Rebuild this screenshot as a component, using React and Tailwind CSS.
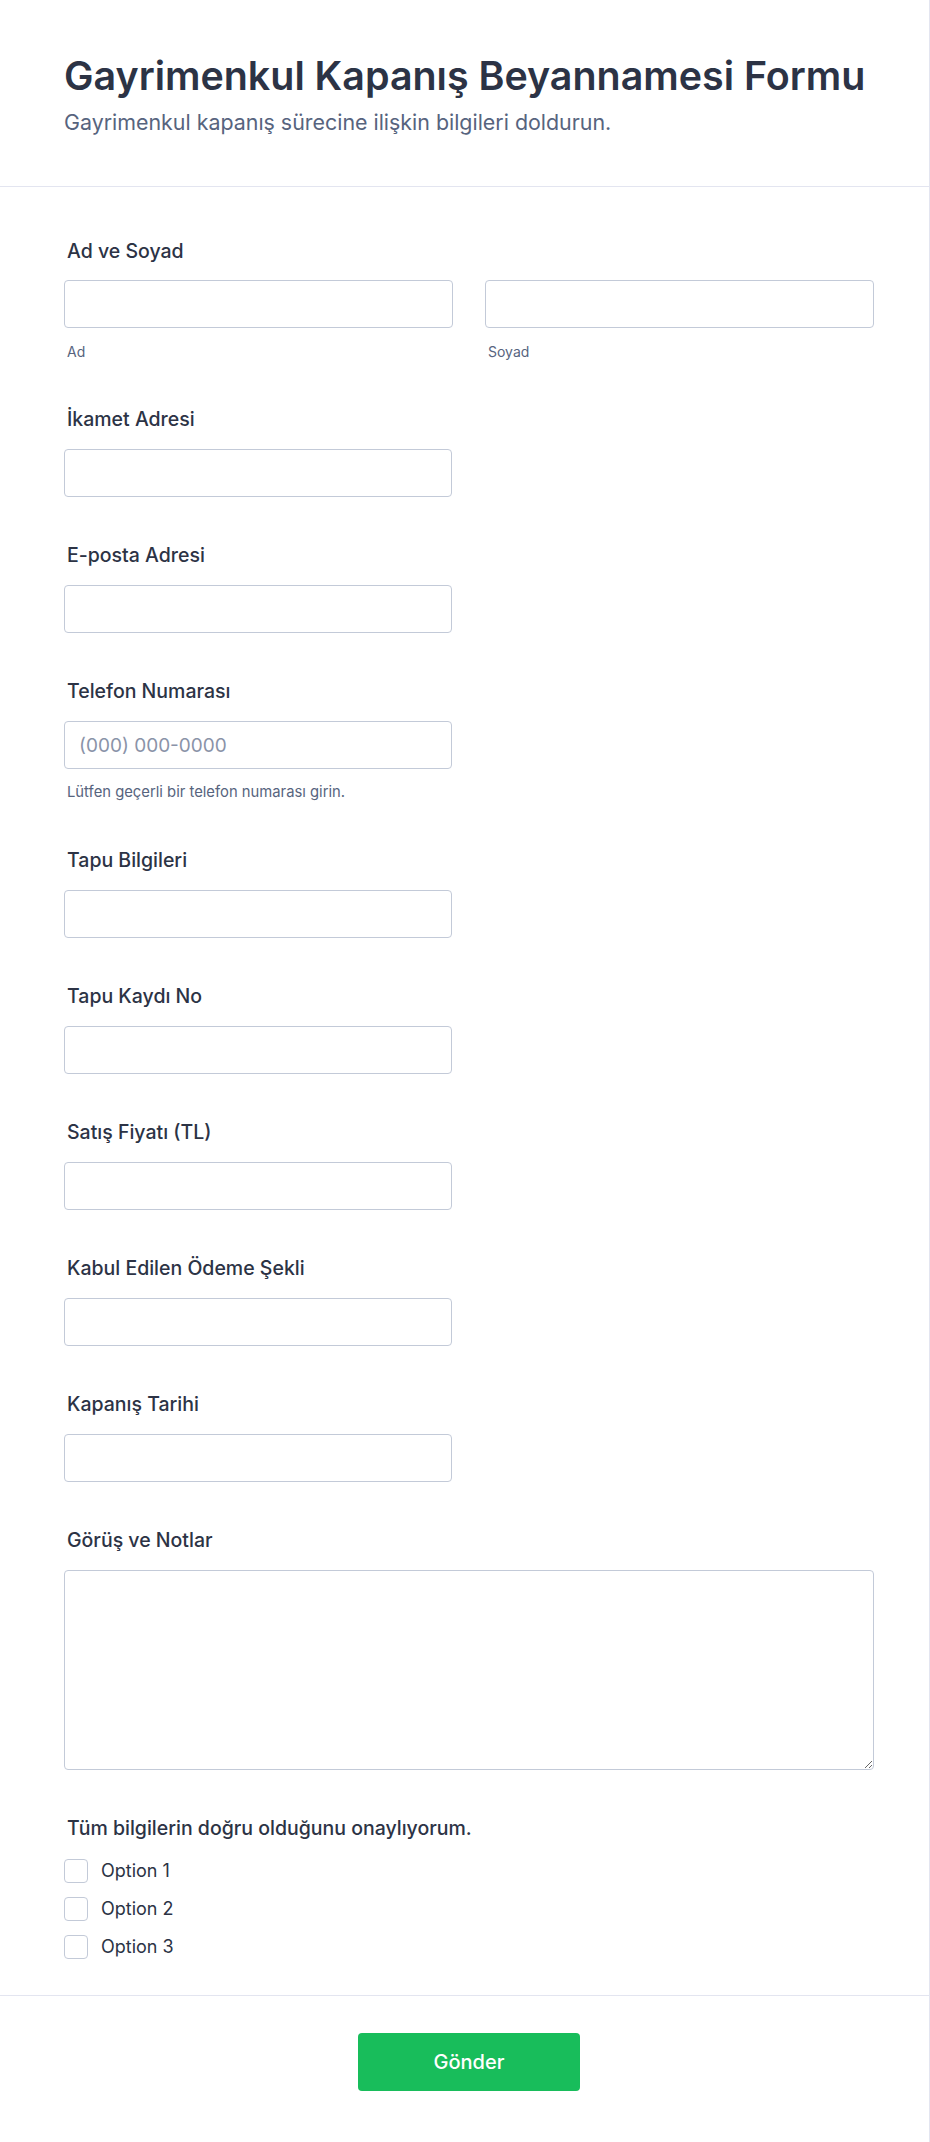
const fields = [
    { label: 'İkamet Adresi' },
    { label: 'E-posta Adresi' },
    { label: 'Telefon Numarası', placeholder: '(000) 000-0000', helper: 'Lütfen geçerli bir telefon numarası girin.' },
    { label: 'Tapu Bilgileri' },
    { label: 'Tapu Kaydı No' },
    { label: 'Satış Fiyatı (TL)' },
    { label: 'Kabul Edilen Ödeme Şekli' },
    { label: 'Kapanış Tarihi' },
];

const inputCls =
    'block h-12 w-full rounded-[4px] border border-[#c3cad8] bg-white px-[14px] text-[19px] text-[#2c3345] placeholder:text-[#8a93a8] outline-none';

const Label = ({ children }) => (
    <label className="block pl-[3px] text-[19.5px] font-medium leading-7 text-[#2c3345]">{children}</label>
);

const App = () => {
    return (
        <div className="min-h-[2142px] w-full border-r border-[#e3e5f0] bg-white font-['Inter',sans-serif]">
            {/* Header */}
            <div className="border-b border-[#e3e5f0] pl-16 pr-[55px] pt-[52px] pb-[50px]">
                <h1 className="text-[39.4px] font-semibold leading-[48px] text-[#2c3345]">
                    Gayrimenkul Kapanış Beyannamesi Formu
                </h1>
                <p className="mt-2 text-[21.4px] leading-7 text-[#57647e]">
                    Gayrimenkul kapanış sürecine ilişkin bilgileri doldurun.
                </p>
            </div>

            {/* Form body */}
            <div className="flex flex-col gap-[44px] pl-16 pr-[55px] pt-[50px] pb-9">
                {/* Name */}
                <div>
                    <Label>Ad ve Soyad</Label>
                    <div className="mt-[15px] grid grid-cols-2 gap-8">
                        <div>
                            <input className={inputCls} />
                            <div className="mt-[15px] pl-[3px] text-[14px] leading-[18px] text-[#57647e]">Ad</div>
                        </div>
                        <div>
                            <input className={inputCls} />
                            <div className="mt-[15px] pl-[3px] text-[14px] leading-[18px] text-[#57647e]">Soyad</div>
                        </div>
                    </div>
                </div>

                {fields.map((f) => (
                    <div key={f.label}>
                        <Label>{f.label}</Label>
                        <div className="mt-4 w-[388px]">
                            <input className={inputCls} placeholder={f.placeholder} />
                        </div>
                        {f.helper && (
                            <div className="mt-[13px] pl-[3px] text-[14.8px] leading-5 text-[#57647e]">{f.helper}</div>
                        )}
                    </div>
                ))}

                {/* Notes */}
                <div>
                    <Label>Görüş ve Notlar</Label>
                    <textarea className="mt-4 block h-[200px] w-full rounded-[4px] border border-[#c3cad8] bg-white px-[14px] py-3 text-[18px] outline-none" />
                </div>

                {/* Confirmation */}
                <div>
                    <Label>Tüm bilgilerin doğru olduğunu onaylıyorum.</Label>
                    <div className="mt-[17px] flex flex-col gap-[14px]">
                        {['Option 1', 'Option 2', 'Option 3'].map((o) => (
                            <label key={o} className="flex items-center gap-[13px]">
                                <span className="h-6 w-6 shrink-0 rounded-[4px] border border-[#c3cad8] bg-white"></span>
                                <span className="text-[18px] leading-6 text-[#2c3345]">{o}</span>
                            </label>
                        ))}
                    </div>
                </div>
            </div>

            {/* Footer */}
            <div className="flex justify-center border-t border-[#e3e5f0] pl-16 pr-[55px] pt-[37px] pb-[50px]">
                <button className="h-[58px] w-[222px] rounded-[4px] bg-[#18bd5b] text-[20px] font-medium text-white">
                    Gönder
                </button>
            </div>
        </div>
    );
};

export default App;
